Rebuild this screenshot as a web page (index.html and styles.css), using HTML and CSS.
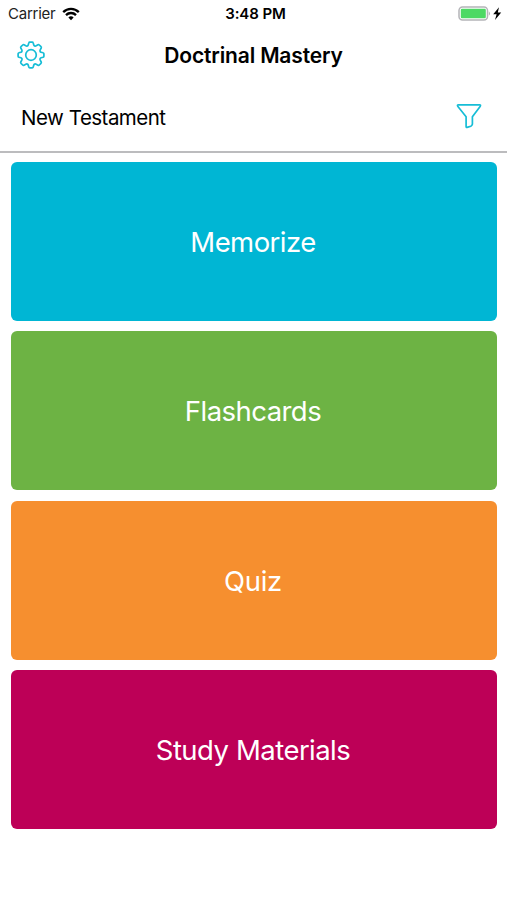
FILE: index.html
```html
<!DOCTYPE html>
<html lang="en">
<head>
<meta charset="utf-8">
<title>Doctrinal Mastery</title>
<link rel="stylesheet" href="styles.css">
</head>
<body>
<div class="status">
  <div class="carrier"><span class="carrier-name">Carrier</span>
    <svg class="wifi" width="18" height="14" viewBox="0 0 18 14" fill="none" stroke="#000" stroke-width="2.3"><path d="M1.2 5.1C5.6 .7 12.4 .7 16.8 5.1"/><path d="M4 8.1C6.8 5.3 11.2 5.3 14 8.1"/><path d="M9 13.2 6.4 10.4C7.9 9 10.1 9 11.6 10.4Z" fill="#000" stroke="none"/></svg>
  </div>
  <div class="time">3:48 PM</div>
  <div class="power">
    <svg width="45" height="16" viewBox="0 0 45 16"><rect x="1" y="1" width="28.5" height="13" rx="3.5" fill="#fff" stroke="#b4b4b8" stroke-width="1.5"/><rect x="2.8" y="2.8" width="25" height="9.4" rx="1.2" fill="#4cd964"/><path d="M30.8 5.2Q33.4 7.5 30.8 9.8Z" fill="#b4b4b8"/><path d="M41 1.2 35.2 8.2H38.6L37 14 43.2 6.4H39.8Z" fill="#000"/></svg>
  </div>
</div>
<header class="nav">
  <svg class="gear" width="28" height="28" viewBox="-14 -14 28 28" fill="none" stroke="#16bdd6" stroke-width="1.7" stroke-linejoin="round"><path d="M-1.2-12.9H1.2Q2-12.9 2.2-12.1L2.8-10.1Q3-9.4 3.7-9.1T5.2-9.2L7-10.2Q7.8-10.6 8.3-10L10-8.3Q10.6-7.8 10.2-7L9.2-5.2Q8.8-4.4 9.1-3.7T10.1-2.8L12.1-2.2Q12.9-2 12.9-1.2V1.2Q12.9 2 12.1 2.2L10.1 2.8Q9.4 3 9.1 3.7T9.2 5.2L10.2 7Q10.6 7.8 10 8.3L8.3 10Q7.8 10.6 7 10.2L5.2 9.2Q4.4 8.8 3.7 9.1T2.8 10.1L2.2 12.1Q2 12.9 1.2 12.9H-1.2Q-2 12.9-2.2 12.1L-2.8 10.1Q-3 9.4-3.7 9.1T-5.2 9.2L-7 10.2Q-7.8 10.6-8.3 10L-10 8.3Q-10.6 7.8-10.2 7L-9.2 5.2Q-8.8 4.4-9.1 3.7T-10.1 2.8L-12.1 2.2Q-12.9 2-12.9 1.2V-1.2Q-12.9-2-12.1-2.2L-10.1-2.8Q-9.4-3-9.1-3.7T-9.2-5.2L-10.2-7Q-10.6-7.8-10-8.3L-8.3-10Q-7.8-10.6-7-10.2L-5.2-9.2Q-4.4-8.8-3.7-9.1T-2.8-10.1L-2.2-12.1Q-2-12.9-1.2-12.9Z"/><circle r="5.3"/></svg>
  <h1 class="title">Doctrinal Mastery</h1>
</header>
<div class="filter">
  <span class="filter-name">New Testament</span>
  <svg class="funnel" width="26" height="26" viewBox="0 0 26 26" fill="none" stroke="#16bdd6" stroke-width="1.7" stroke-linejoin="round"><path d="M2.4 1.8H23.6Q25 1.8 24.3 3.2L16.4 13.8V21.2Q16.2 22.6 14.8 23.2L11 24.4Q10.1 24.5 10.1 23.6V13.8L1.7 3.2Q1 1.8 2.4 1.8Z"/></svg>
</div>
<main class="menu">
  <div class="card memorize"><span>Memorize</span></div>
  <div class="card flashcards"><span>Flashcards</span></div>
  <div class="card quiz"><span>Quiz</span></div>
  <div class="card study"><span>Study Materials</span></div>
</main>
</body>
</html>
```
FILE: styles.css
```css
* { box-sizing: border-box; }
body {
  margin: 0;
  height: 900px;
  overflow: hidden;
  background: #fff;
  color: #000;
  font-family: Inter, "Liberation Sans", sans-serif;
}
.status {
  display: grid;
  grid-template-columns: 1fr auto 1fr;
  align-items: center;
  height: 27px;
  padding: 0 4px 0 8px;
}
.carrier { display: flex; align-items: center; gap: 7px; font-size: 15px; color: #222; }
.carrier-name { letter-spacing: -0.25px; }
.time { font-size: 15px; font-weight: 600; letter-spacing: -0.1px; }
.power { display: flex; justify-content: flex-end; }
.nav {
  display: grid;
  grid-template-columns: 1fr auto 1fr;
  align-items: center;
  height: 56px;
  padding: 0 17px;
}
.title { margin: 0; padding-top: 2px; font-size: 21px; line-height: 28px; font-weight: 600; letter-spacing: -0.15px; }
.filter {
  display: flex;
  align-items: center;
  justify-content: space-between;
  height: 70px;
  padding: 0 25px 0 21px;
  border-bottom: 2px solid #bcbcbe;
  font-size: 20.5px;
}
.filter-name { letter-spacing: -0.55px; word-spacing: 0.5px; }
.funnel { margin-bottom: 2px; }
.menu { display: grid; grid-auto-rows: 159px; gap: 10.3px; padding: 9px 10px 0 11px; }
.card {
  display: flex;
  align-items: center;
  justify-content: center;
  padding: 1px 2px 0 0;
  border-radius: 6px;
  color: #fff;
  font-size: 27.5px;
  letter-spacing: -0.55px;
  word-spacing: 0.5px;
}
.memorize { background: #00b6d4; }
.flashcards { background: #6db344; }
.quiz { background: #f68f2f; letter-spacing: -0.3px; }
.study { background: #bd0057; }
```
